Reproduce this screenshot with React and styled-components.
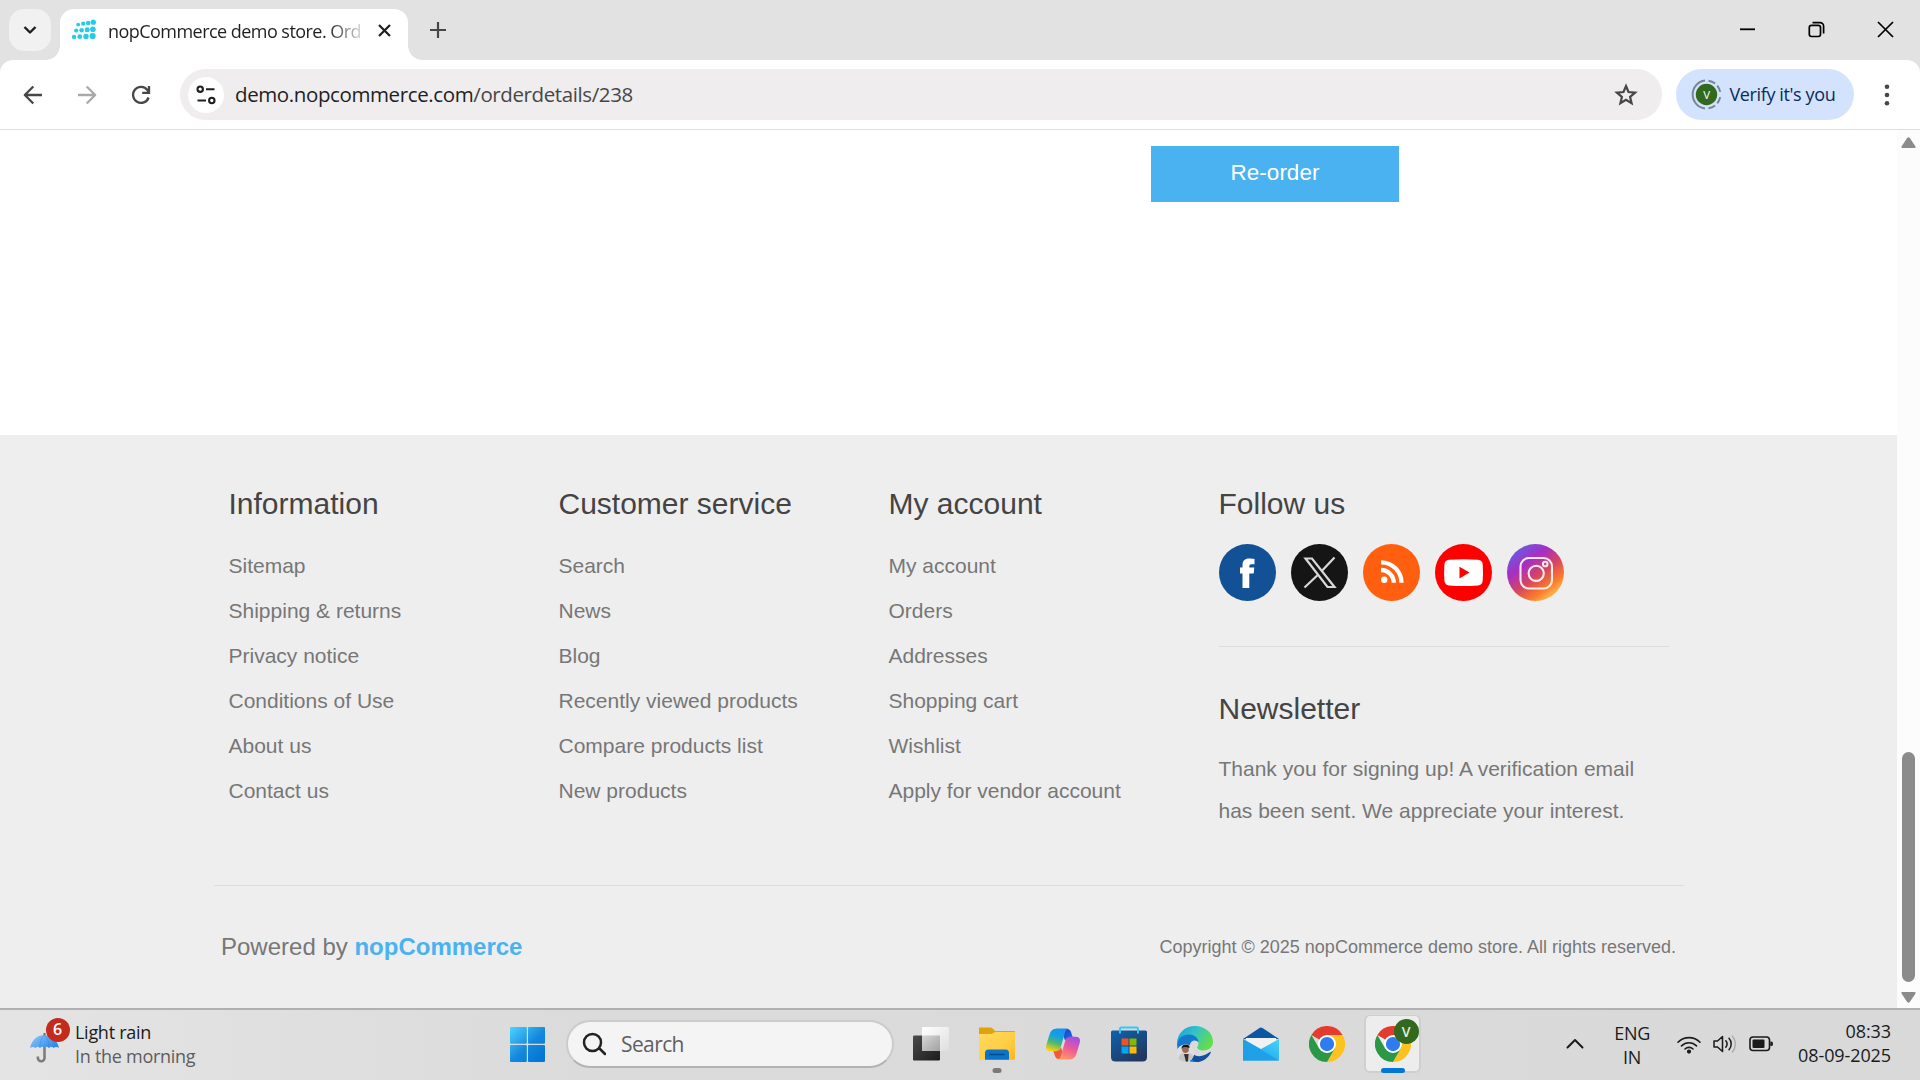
import React from 'react';
import styled, { createGlobalStyle } from 'styled-components';

const sans = `'Liberation Sans', Arial, sans-serif`;
const ui = `'Open Sans', 'Noto Sans', sans-serif`;

const Global = createGlobalStyle`
  *, *::before, *::after { box-sizing: border-box; }
  body { margin: 0; background: #fff; overflow: hidden; }
  svg { display: block; flex: none; }
  h2, p, ul { margin: 0; padding: 0; font-weight: 400; list-style: none; }
  button { border: 0; padding: 0; background: none; font: inherit; }
`;

const Screen = styled.div`
  width: 1920px;
  height: 1080px;
  display: flex;
  flex-direction: column;
  overflow: hidden;
  font-family: ${ui};
`;

/* ---------- browser chrome ---------- */
const TabStrip = styled.header`
  height: 60px;
  flex: none;
  background: #e2e2e2;
  display: flex;
  align-items: flex-start;
  padding: 9px 0 0 9px;
`;

const TabSearch = styled.button`
  width: 42px;
  height: 42px;
  border-radius: 15px;
  background: #f1f1f1;
  display: grid;
  place-items: center;
`;

const Tab = styled.div`
  position: relative;
  width: 348px;
  height: 51px;
  margin-left: 9px;
  padding: 0 18px 9px 11px;
  background: #fff;
  border-radius: 14px 14px 0 0;
  display: flex;
  align-items: center;

  &::before, &::after {
    content: '';
    position: absolute;
    bottom: 0;
    width: 14px;
    height: 14px;
  }
  &::before { left: -14px; background: radial-gradient(circle at 0 0, transparent 13.5px, #fff 14px); }
  &::after { right: -14px; background: radial-gradient(circle at 100% 0, transparent 13.5px, #fff 14px); }
`;

const TabTitle = styled.span`
  width: 252px;
  margin: 2px 18px 0 12px;
  white-space: nowrap;
  font-size: 18px;
  line-height: 26px;
  letter-spacing: -0.54px;
  color: #1f1f1f;
  mask-image: linear-gradient(90deg, #000 220px, transparent 260px);
`;

const NewTab = styled.button`
  margin: 13px 0 0 22px;
`;

const WindowControls = styled.div`
  margin: 12px 26px 0 auto;
  display: flex;
  gap: 52px;
`;

const ToolbarBack = styled.div`
  flex: none;
  background: #e2e2e2;
`;

const Toolbar = styled.div`
  height: 70px;
  background: #fff;
  border-bottom: 1px solid #dfdfdf;
  border-radius: 13px 13px 0 0;
  display: flex;
  align-items: center;
  padding-left: 18px;
`;

const NavButtons = styled.div`
  display: flex;
  gap: 24px;
`;

const AddressBar = styled.div`
  width: 1482px;
  height: 51px;
  margin-left: 24px;
  padding: 0 21px 0 8px;
  border-radius: 26px;
  background: #efedee;
  display: flex;
  align-items: center;
`;

const SiteInfo = styled.span`
  width: 36px;
  height: 36px;
  border-radius: 50%;
  background: #fff;
  display: grid;
  place-items: center;
`;

const Url = styled.span`
  flex: 1;
  margin: 0 0 2px 11px;
  font-size: 20.5px;
  line-height: 30px;
  letter-spacing: -0.39px;
  color: #1f1f1f;
`;

const UrlPath = styled.span`
  color: #474747;
`;

const ProfileChip = styled.button`
  width: 178px;
  height: 51px;
  margin-left: 13.5px;
  padding-left: 15px;
  border-radius: 26px;
  background: #d3e3fd;
  display: flex;
  align-items: center;
  gap: 8px;
  font-size: 18px;
  letter-spacing: -0.38px;
  white-space: nowrap;
  color: #0b2a5c;
`;

const ChipLabel = styled.span`
  margin-bottom: 1px;
`;

const MenuDots = styled.button`
  margin-left: 27px;
`;

/* ---------- page ---------- */
const Viewport = styled.div`
  flex: 1;
  min-height: 0;
  display: flex;
`;

const Page = styled.main`
  width: 1897px;
  display: flex;
  flex-direction: column;
  font-family: ${sans};
`;

const OrderArea = styled.section`
  height: 305px;
  padding: 16px 498px 0 0;
  display: flex;
  justify-content: flex-end;
  align-items: flex-start;
`;

const ReorderButton = styled.button`
  width: 248px;
  height: 56px;
  padding-bottom: 2px;
  background: #4ab2f1;
  color: #fff;
  font-family: ${sans};
  font-size: 22.5px;
`;

const Footer = styled.footer`
  flex: 1;
  background: #eee;
  padding-top: 52px;
  color: #777;
`;

const FooterInner = styled.div`
  width: 1470px;
  margin: 0 auto;
`;

const FooterUpper = styled.div`
  height: 398px;
  padding: 0 15px;
  display: grid;
  grid-template-columns: 330px 330px 330px 450px;
`;

const FooterTitle = styled.h2`
  font-size: 30px;
  line-height: 34px;
  color: #444;
`;

const LinkList = styled.ul`
  margin-top: 22px;
`;

const LinkItem = styled.li`
  height: 45px;
  font-size: 21px;
  line-height: 45px;
  white-space: nowrap;
`;

const SocialRow = styled.div`
  display: flex;
  gap: 15px;
  margin-top: 23px;
  padding-bottom: 45px;
  border-bottom: 1px solid #ddd;
  margin-bottom: 45px;
`;

const Notice = styled.p`
  margin-top: 22px;
  font-size: 21px;
  line-height: 42px;
`;

const FooterLower = styled.div`
  border-top: 1px solid #ddd;
  padding: 38px 7.5px 0;
  display: flex;
  justify-content: space-between;
  align-items: center;
  line-height: 46px;
`;

const Powered = styled.span`
  font-size: 24px;
`;

const Brand = styled.b`
  color: #4ab2f1;
`;

const Copyright = styled.span`
  font-size: 18px;
`;

const ScrollTrack = styled.div`
  width: 23px;
  background: #fcfcfc;
  display: flex;
  flex-direction: column;
  align-items: center;
  padding: 7px 0 5px;
`;

const Thumb = styled.div`
  width: 13px;
  height: 230px;
  margin: auto 0 10px;
  border-radius: 7px;
  background: #8b8b8b;
`;

/* ---------- taskbar ---------- */
const Taskbar = styled.footer`
  height: 72px;
  flex: none;
  border-top: 2px solid #b0b0b0;
  padding-bottom: 2px;
  background: linear-gradient(90deg, #e4e4e4, #dbdbdb 30%, #d9d9d9);
  display: flex;
  align-items: center;
  color: #1b1b1b;
  font-size: 18px;
`;

const Weather = styled.div`
  width: 481px;
  margin: 0 0 1px 29px;
  display: flex;
  align-items: center;
  gap: 15px;
`;

const WeatherIcon = styled.div`
  position: relative;
  width: 31px;
  height: 51px;
  padding-top: 15px;
`;

const Badge = styled.span`
  position: absolute;
  left: 16.5px;
  top: 0;
  width: 24px;
  height: 24px;
  border-radius: 50%;
  background: #c42b1c;
  color: #fff;
  font-size: 16px;
  font-weight: 600;
  line-height: 23px;
  text-align: center;
`;

const Stack = styled.div`
  display: flex;
  flex-direction: column;
  line-height: 24px;
  white-space: nowrap;
  text-align: ${p => p.$align || 'left'};
  letter-spacing: ${p => p.$track || 0}px;
`;

const Muted = styled.span`
  color: #5d5d5d;
`;

const SearchBox = styled.div`
  width: 328px;
  height: 48px;
  margin: 0 3.5px 0 21px;
  padding-left: 14px;
  border: 2px solid #cbcbcb;
  border-bottom-color: #b3b3b3;
  border-radius: 24px;
  background: #f4f4f4;
  display: flex;
  align-items: center;
  gap: 15px;
  font-size: 21px;
  letter-spacing: -0.6px;
  color: #5f5f5f;
`;

const AppSlot = styled.div`
  width: 66px;
  height: 70px;
  position: relative;
  display: grid;
  place-items: center;
`;

const ActiveTile = styled.div`
  width: 57px;
  height: 58px;
  border: 2px solid #cfcfcf;
  border-top-width: 1px;
  border-radius: 6px;
  background: #ededed;
  display: grid;
  place-items: center;
`;

const Indicator = styled.span`
  position: absolute;
  left: 50%;
  bottom: 6px;
  width: ${p => (p.$active ? 24 : 9)}px;
  height: 5px;
  transform: translateX(-50%);
  border-radius: 3px;
  background: ${p => (p.$active ? '#0078d4' : '#7a7a7a')};
`;

const AvatarBadge = styled.span`
  position: absolute;
  left: 34px;
  top: 9.5px;
  width: 25px;
  height: 25px;
  border-radius: 50%;
  background: #33691e;
  color: #e4ecdf;
  font: 600 14px/25px ${ui};
  text-align: center;
`;

const Tray = styled.div`
  margin-left: auto;
  padding-right: 29px;
  display: flex;
  align-items: center;
`;

const LanguageBox = styled.div`
  width: 36px;
  margin: 1px 27px 0 30px;
  display: flex;
  justify-content: center;
`;

const TrayIcons = styled.div`
  display: flex;
  align-items: center;
  gap: 12px;
  margin-right: 24px;
`;

const Clock = styled.div`
  margin-bottom: 2px;
`;

/* ---------- icons ---------- */
const Line = ({ w, h = w, d, s = 2, c = '#333', vb, cap = 'butt' }) => (
  <svg width={w} height={h} viewBox={vb || `0 0 ${w} ${h}`} fill="none" stroke={c} strokeWidth={s} strokeLinecap={cap} strokeLinejoin="round">
    <path d={d} />
  </svg>
);

const Favicon = () => (
  <svg width="25" height="24" viewBox="0 0 25 24" fill="#27cbe8">
    {[[7.2, 6.6, 1.9], [12.2, 5.7, 2.1], [17.2, 5, 2.3], [22.3, 4.2, 2.6],
      [5.2, 12.6, 2.1], [10.6, 12.2, 2.3], [16.2, 11.7, 2.5], [21.9, 11.2, 2.8],
      [3, 18.9, 2.2], [8.8, 18.7, 2.4], [15, 18.4, 2.7], [21.6, 18, 3.1]].map(([x, y, r]) => (
      <circle key={`${x}-${y}`} cx={x} cy={y} r={r} />
    ))}
  </svg>
);

const Reload = () => (
  <svg width="30" height="30" viewBox="0 0 30 30" fill="none" stroke="#474747" strokeWidth="2.3">
    <path d="M22.6 17.5A8 8 0 1 1 21.4 10L23 12.2" />
    <path d="M23 6v6.8h-6.8" />
  </svg>
);

const Tune = () => (
  <svg width="22" height="22" viewBox="0 0 22 22" fill="none" stroke="#1f1f1f" strokeWidth="2.1">
    <circle cx="5.2" cy="5.2" r="2.7" /><path d="M11 5.2h8.500M2.500 16.500h8.500" /><circle cx="16.800" cy="16.500" r="2.700" />
  </svg>
);

const Star = () => (
  <svg width="30" height="30" viewBox="0 0 30 30" fill="none" stroke="#474747" strokeWidth="2.2" strokeLinejoin="miter">
    <path d="M15 6l2.500 6 6.600.6-5 4.300 1.500 6.400-5.600-3.400-5.600 3.400 1.500-6.400-5-4.300 6.600-.6z" />
  </svg>
);

const Restore = () => (
  <svg width="17" height="17" viewBox="0 0 17 17" fill="none" stroke="#000" strokeWidth="1.7">
    <rect x="1.3" y="4.3" width="11.2" height="11.2" rx="2.2" />
    <path d="M4.5 1.6h7.5a3.6 3.6 0 0 1 3.6 3.6v7.4" />
  </svg>
);

const ChipAvatar = () => (
  <svg width="31" height="31" viewBox="0 0 31 31">
    <path d="M14 1.6A14 14 0 0 0 14 29.4M17.5 1.7a14 14 0 0 1 6.6 2.8M26.2 6.6a14 14 0 0 1 3 6.3M29.2 18.1a14 14 0 0 1-3 6.3M24.1 26.5a14 14 0 0 1-6.6 2.8" fill="none" stroke="#7a8496" strokeWidth="2" />
    <circle cx="15.5" cy="15.5" r="10.7" fill="#33691e" />
    <text x="15.5" y="19.7" textAnchor="middle" fontFamily="Open Sans" fontSize="11.5" fill="#fff">V</text>
  </svg>
);

const Facebook = () => (
  <svg width="57" height="57" viewBox="0 0 57 57">
    <circle cx="28.5" cy="28.5" r="28.5" fill="#125196" />
    <path d="M23.5 44V29.5H21V23.5h2.5V21c0-4.200 2.300-6.500 6.600-6.500 2 0 4 .2 5.400.5v5.300h-2.700c-2 0-2.500.9-2.500 2.200v1h5l-.6 6h-4.400V44z" fill="#fff" />
  </svg>
);

const XLogo = () => (
  <svg width="57" height="57" viewBox="0 0 57 57">
    <circle cx="28.500" cy="28.500" r="28.500" fill="#151515" />
    <g fill="none" stroke="#d8d8d8" strokeWidth="2.200">
      <path d="M14.500 14.500h6.500L43.500 43H36.500z" />
      <path d="M43.500 13.500L31 26.800M26.500 31.200L13.500 43.500" />
    </g>
  </svg>
);

const Rss = () => (
  <svg width="57" height="57" viewBox="0 0 57 57">
    <circle cx="28.500" cy="28.500" r="28.500" fill="#ff5f0f" />
    <circle cx="21.200" cy="35.800" r="3.200" fill="#fff" />
    <g fill="none" stroke="#fff" strokeWidth="4.300">
      <path d="M18 26a12.800 12.800 0 0 1 12.800 12.800" />
      <path d="M18 18.300a20.500 20.500 0 0 1 20.500 20.500" />
    </g>
  </svg>
);

const Youtube = () => (
  <svg width="57" height="57" viewBox="0 0 57 57">
    <circle cx="28.500" cy="28.500" r="28.500" fill="#f00" />
    <path d="M14 15.800q14.500-1 29 0 4.500.4 4.700 4.700.6 8 0 16-.3 4.500-4.700 4.900-14.500 1-29 0-4.200-.4-4.600-4.900-.6-8 0-16 .300-4.300 4.600-4.700z" fill="#fff" />
    <path d="M24.500 22.800v11.600l10-5.800z" fill="#f00" />
  </svg>
);

const Instagram = () => (
  <svg width="57" height="57" viewBox="0 0 57 57">
    <defs>
      <linearGradient id="ig" x1=".15" y1=".1" x2=".8" y2=".97">
        <stop offset="0" stopColor="#6a5ae0" /><stop offset=".28" stopColor="#a62fc4" />
        <stop offset=".55" stopColor="#d6455f" /><stop offset=".8" stopColor="#fd7e2a" /><stop offset="1" stopColor="#ffc860" />
      </linearGradient>
    </defs>
    <circle cx="28.500" cy="28.500" r="28.500" fill="url(#ig)" />
    <g fill="none" stroke="#fff" strokeOpacity=".88" strokeWidth="2.100">
      <rect x="13.500" y="14" width="31.500" height="30.500" rx="8.500" />
      <circle cx="29.200" cy="29.300" r="7.600" /><circle cx="38.200" cy="20" r="2.300" />
    </g>
  </svg>
);

const Umbrella = () => (
  <svg width="31" height="30" viewBox="0 0 31 30">
    <defs><linearGradient id="um" x2="1" y2=".6"><stop stopColor="#8fcaff" /><stop offset="1" stopColor="#2e8bea" /></linearGradient></defs>
    <path d="M15.500 12v13a3.300 3.300 0 0 1-6.600 0v-1.500" fill="none" stroke="#7d7d7d" strokeWidth="2.600" />
    <path d="M15.500 0v3" stroke="#666" strokeWidth="2" />
    <path d="M1 15C3 6 9 2 15.500 2S28 6 30 15q-3-2-5.500 0-2-2.300-4.500 0-2.300-2.300-4.500-.3-2.300-2-4.500.3-2.500-2.300-4.500 0-2.500-2-5.500 0z" fill="url(#um)" />
    <path d="M11 14.700Q11 6 15.500 2 20 6 20 15" fill="none" stroke="#2f80d8" strokeWidth=".6" opacity=".6" />
  </svg>
);

const WindowsLogo = () => (
  <svg width="35" height="35" viewBox="0 0 35 35">
    <defs><linearGradient id="win" gradientUnits="userSpaceOnUse" x1="0" y1="0" x2="30" y2="32"><stop stopColor="#4cd3ff" /><stop offset=".6" stopColor="#1488dd" /><stop offset="1" stopColor="#0078d4" /></linearGradient></defs>
    <g fill="url(#win)">
      <rect width="16.800" height="16.800" rx="1" /><rect x="18" width="17" height="16.800" rx="1" />
      <rect y="18" width="16.800" height="17" rx="1" /><rect x="18" y="18" width="17" height="17" rx="1" />
    </g>
  </svg>
);

const TaskView = () => (
  <svg width="36" height="36" viewBox="0 0 36 36">
    <defs>
      <linearGradient id="tv1" x2="1" y2="1"><stop stopColor="#4a4a4a" /><stop offset="1" stopColor="#1c1c1c" /></linearGradient>
      <linearGradient id="tv2" x2="1" y2="1"><stop stopColor="#fff" /><stop offset="1" stopColor="#dedede" /></linearGradient>
      <linearGradient id="tv3" x2="1" y2="1"><stop stopColor="#d6d6d6" /><stop offset="1" stopColor="#a2a2a2" /></linearGradient>
    </defs>
    <rect x="0" y="9.500" width="27" height="25" rx="1.200" fill="url(#tv1)" />
    <rect x="9" y="1" width="27" height="24" rx="1.200" fill="url(#tv2)" />
    <rect x="9" y="9.500" width="18" height="15.500" fill="url(#tv3)" />
  </svg>
);

const Folder = () => (
  <svg width="36" height="34" viewBox="0 0 36 34">
    <defs><linearGradient id="fo" x2="1" y2="1"><stop stopColor="#ffda5e" /><stop offset=".6" stopColor="#ffce45" /><stop offset="1" stopColor="#fcb61a" /></linearGradient></defs>
    <path d="M0 1.500Q0 .5 1 .5H11.500q1 0 1.600.6L16 4H35q1 0 1 1v6H0z" fill="#e0a30b" />
    <path d="M0 7H12.500L16 5H35q1 0 1 1V31.500q0 1.200-1.200 1.200H1.200Q0 32.700 0 31.500z" fill="url(#fo)" />
    <path d="M6 32.700V26q0-3.500 3.500-3.500h17Q30 22.500 30 26v6.700z" fill="#0a74c9" />
    <path d="M11 27.500h14" stroke="#04498a" strokeWidth="1.600" strokeLinecap="round" />
  </svg>
);

const Copilot = () => (
  <svg width="36" height="34" viewBox="0 0 36 34">
    <defs>
      <linearGradient id="c1" x1=".6" y1="0" x2=".3" y2="1"><stop stopColor="#1b8ff0" /><stop offset=".35" stopColor="#13a3e0" /><stop offset=".65" stopColor="#52b86b" /><stop offset="1" stopColor="#ffd20f" /></linearGradient>
      <linearGradient id="c2" x1=".7" y1="0" x2=".3" y2="1"><stop stopColor="#a04ee8" /><stop offset=".5" stopColor="#ee5a96" /><stop offset="1" stopColor="#ff9a62" /></linearGradient>
      <linearGradient id="c3" x2="1" y2="1"><stop stopColor="#1a38c8" /><stop offset="1" stopColor="#1f72e8" /></linearGradient>
    </defs>
    <path d="M16 2h6q3 0 4 3l2 6h-4q-3 0-4 2.500z" fill="url(#c3)" />
    <path d="M20 32h-6q-3 0-4-3L8 23h4q3 0 4-2.500z" fill="#f4583c" />
    <path d="M12 1.500h11q-2 .5-3 4l-4.200 14.500q-1.200 4.200-5.200 4.200H5.500q-6 0-4-7L4.500 7.500q1.500-6 7.500-6z" fill="url(#c1)" />
    <path d="M24 32.500H13q2-.5 3-4l4.200-14.500q1.200-4.200 5.200-4.200h5.100q6 0 4 7L31.500 26.500q-1.500 6-7.500 6z" fill="url(#c2)" />
  </svg>
);

const Store = () => (
  <svg width="36" height="36" viewBox="0 0 36 36">
    <defs><linearGradient id="st" x2=".7" y2="1"><stop stopColor="#0d63ae" /><stop offset="1" stopColor="#22375f" /></linearGradient></defs>
    <path d="M0 6q0-1.500 1.500-1.500h33Q36 4.500 36 6v25q0 4.500-4.500 4.500h-27Q0 35.500 0 31z" fill="url(#st)" />
    <path d="M9 7.500V2.800q0-1.300 1.300-1.300h15.400q1.300 0 1.300 1.300v4.700" fill="none" stroke="#3cc4f4" strokeWidth="2" />
    <rect x="10.500" y="12.500" width="7" height="7" fill="#f25022" /><rect x="18.500" y="12.500" width="7" height="7" fill="#7fba00" />
    <rect x="10.500" y="20.500" width="7" height="7" fill="#00a4ef" /><rect x="18.500" y="20.500" width="7" height="7" fill="#ffb900" />
  </svg>
);

const Edge = () => (
  <svg width="36" height="36" viewBox="0 0 36 36">
    <defs>
      <linearGradient id="e1" x2="1" y2=".5"><stop stopColor="#159fd8" /><stop offset=".5" stopColor="#31c3c8" /><stop offset="1" stopColor="#62dd4c" /></linearGradient>
      <clipPath id="ec"><circle cx="8.500" cy="27" r="8.800" /></clipPath>
    </defs>
    <path d="M0 18C0 7 8 0 18 0s18 7 18 15.500C36 21 32 24.500 26.500 24.500c-4 0-6.200-1.500-6.200-3 0-1.300 1.200-1.700 1.200-4 0-4-4-7.500-9.500-7.500C5 10 0 15 0 18z" fill="url(#e1)" />
    <path d="M0 18C1 12 6 8.500 12 8.500c6 0 9.500 4 9.500 8-2-3-7.500-3-8.500 2C11.500 27 18 35 24 35c-2 1-4 1-6 1C8 36 0 28 0 18z" fill="#1478cf" />
    <path d="M13 19c-1 8 5 13 13 10.500 3-1 5.500-2.500 7-3.500.8-.4 1 .2.600.9C31 32.500 25 36 19 36c-5-2-9-9-6-17z" fill="#114f9f" />
    <g clipPath="url(#ec)">
      <rect y="18" width="18" height="18" fill="#dedede" />
      <path d="M1 36q0-8 5-9l3 2 3-2q5 1 5 9z" fill="#c9c5c2" />
      <path d="M7 28l2 8h2l.500-8z" fill="#33302f" />
      <circle cx="8.500" cy="23.500" r="3.400" fill="#9a6a52" /><path d="M4.500 23q0-4.500 4.200-4.500T12.500 22q-3-1.500-6-1z" fill="#17120f" />
    </g>
  </svg>
);

const Mail = () => (
  <svg width="36" height="34" viewBox="0 0 36 34">
    <defs><linearGradient id="ma" x1="0" y1="1" x2="1" y2="0"><stop stopColor="#1597e6" /><stop offset="1" stopColor="#45d5fb" /></linearGradient></defs>
    <path d="M0 12L16.500 1q1.500-1 3 0L36 12z" fill="#0b57a4" />
    <path d="M3 11h30v3L18 24 3 14z" fill="#f1f1f1" />
    <path d="M0 12l18 10 18-10v21.500H0z" fill="url(#ma)" />
    <path d="M0 12l36 21.500H0z" fill="#1e9fe8" opacity=".9" />
  </svg>
);

const Chrome = () => (
  <svg width="36" height="36" viewBox="0 0 48 48">
    <path d="M24 24L3.200 12A24 24 0 0 1 44.800 12H24z" fill="#e33b2e" />
    <path d="M24 24l10.400 6L24 48A24 24 0 0 0 44.800 12H24z" fill="#fcc31e" />
    <path d="M3.200 12A24 24 0 0 0 24 48l10.400-18-10.400 6-10.400-6z" fill="#2b9846" />
    <circle cx="24" cy="24" r="12" fill="#fff" /><circle cx="24" cy="24" r="9.500" fill="#2f7cf0" />
  </svg>
);

const Wifi = () => (
  <svg width="24" height="19" viewBox="0 0 24 19" fill="none" stroke="#1b1b1b" strokeWidth="1.600" strokeLinecap="round">
    <path d="M1 7.200a15.500 15.500 0 0 1 22 0M4.500 10.900a10.500 10.500 0 0 1 15 0M8 14a5.700 5.700 0 0 1 8 0" />
    <circle cx="12" cy="16.600" r="1.300" fill="#1b1b1b" />
  </svg>
);

const Speaker = () => (
  <svg width="24" height="20" viewBox="0 0 24 20" fill="none" stroke="#1b1b1b" strokeWidth="1.500" strokeLinejoin="round" strokeLinecap="round">
    <path d="M1 7v6h3.500L9.500 17.500v-15L4.500 7z" />
    <path d="M12.800 6.800a5 5 0 0 1 0 6.400M16 4.300a8.500 8.500 0 0 1 0 11.400" />
    <path d="M19.300 2a12 12 0 0 1 0 16" stroke="#b0b0b0" />
  </svg>
);

const Battery = () => (
  <svg width="25" height="16" viewBox="0 0 25 16">
    <rect x="1" y="1" width="19.500" height="13.500" rx="3" fill="none" stroke="#1b1b1b" strokeWidth="1.600" />
    <rect x="3.500" y="3.500" width="12" height="8.500" rx="1" fill="#1b1b1b" />
    <path d="M21.300 5.500h1a1.600 1.600 0 0 1 1.600 1.600v1.300a1.600 1.600 0 0 1-1.600 1.600h-1z" fill="#1b1b1b" />
  </svg>
);

const ArrowTip = ({ down }) => (
  <svg width="15" height="11" viewBox="0 0 15 11" fill="#8b8b8b">
    <path d={down ? 'M1.500 0h12q1.800 0 .8 1.700L9 9.800q-1.500 1.700-3 0L.7 1.700Q-.3 0 1.500 0z' : 'M1.500 11h12q1.800 0 .8-1.700L9 1.200q-1.500-1.700-3 0L.7 9.300Q-.3 11 1.500 11z'} />
  </svg>
);

const columns = [
  ['Information', ['Sitemap', 'Shipping & returns', 'Privacy notice', 'Conditions of Use', 'About us', 'Contact us']],
  ['Customer service', ['Search', 'News', 'Blog', 'Recently viewed products', 'Compare products list', 'New products']],
  ['My account', ['My account', 'Orders', 'Addresses', 'Shopping cart', 'Wishlist', 'Apply for vendor account']],
];

export default function App() {
  return (
    <Screen>
      <Global />
      <TabStrip>
        <TabSearch><Line w={14} h={10} d="M1.500 2l5.500 5.500L12.500 2" s={2.400} c="#1f1f1f" /></TabSearch>
        <Tab>
          <Favicon />
          <TabTitle>nopCommerce demo store. Ord</TabTitle>
          <Line w={13} d="M1 1l11 11M12 1L1 12" s={2.200} c="#1f1f1f" />
        </Tab>
        <NewTab><Line w={16} d="M8 0v16M0 8h16" s={2.200} c="#474747" /></NewTab>
        <WindowControls>
          <Line w={17} d="M1 8.300h15" s={1.800} c="#000" />
          <Restore />
          <Line w={17} d="M1 1l15 15M16 1L1 16" s={1.700} c="#000" />
        </WindowControls>
      </TabStrip>
      <ToolbarBack>
        <Toolbar>
          <NavButtons>
            <Line w={30} d="M24 15H7M15.300 6.500L6.800 15l8.500 8.500" s={2.300} c="#474747" />
            <Line w={30} d="M6 15h17M14.700 6.500l8.500 8.500-8.500 8.500" s={2.300} c="#a9a9a9" />
            <Reload />
          </NavButtons>
          <AddressBar>
            <SiteInfo><Tune /></SiteInfo>
            <Url>demo.nopcommerce.com<UrlPath>/orderdetails/238</UrlPath></Url>
            <Star />
          </AddressBar>
          <ProfileChip><ChipAvatar /><ChipLabel>Verify it's you</ChipLabel></ProfileChip>
          <MenuDots>
            <svg width="12" height="24" fill="#474747"><circle cx="6" cy="3.700" r="2.300" /><circle cx="6" cy="12" r="2.300" /><circle cx="6" cy="20.300" r="2.300" /></svg>
          </MenuDots>
        </Toolbar>
      </ToolbarBack>
      <Viewport>
        <Page>
          <OrderArea><ReorderButton>Re-order</ReorderButton></OrderArea>
          <Footer>
            <FooterInner>
              <FooterUpper>
                {columns.map(([title, links]) => (
                  <div key={title}>
                    <FooterTitle>{title}</FooterTitle>
                    <LinkList>{links.map(l => <LinkItem key={l}>{l}</LinkItem>)}</LinkList>
                  </div>
                ))}
                <div>
                  <FooterTitle>Follow us</FooterTitle>
                  <SocialRow><Facebook /><XLogo /><Rss /><Youtube /><Instagram /></SocialRow>
                  <FooterTitle>Newsletter</FooterTitle>
                  <Notice>Thank you for signing up! A verification email has been sent. We appreciate your interest.</Notice>
                </div>
              </FooterUpper>
              <FooterLower>
                <Powered>Powered by <Brand>nopCommerce</Brand></Powered>
                <Copyright>Copyright © 2025 nopCommerce demo store. All rights reserved.</Copyright>
              </FooterLower>
            </FooterInner>
          </Footer>
        </Page>
        <ScrollTrack><ArrowTip /><Thumb /><ArrowTip down /></ScrollTrack>
      </Viewport>
      <Taskbar>
        <Weather>
          <WeatherIcon><Umbrella /><Badge>6</Badge></WeatherIcon>
          <Stack $track={-0.28}><span>Light rain</span><Muted>In the morning</Muted></Stack>
        </Weather>
        <WindowsLogo />
        <SearchBox>
          <Line w={24} d="M17 10.500a8.500 8.500 0 1 1-17 0a8.500 8.500 0 1 1 17 0M15.500 16.500l5.500 5.500" vb="-2 0 24 24" s={2.500} c="#222" cap="round" />
          Search
        </SearchBox>
        <AppSlot><TaskView /></AppSlot>
        <AppSlot><Folder /><Indicator /></AppSlot>
        <AppSlot><Copilot /></AppSlot>
        <AppSlot><Store /></AppSlot>
        <AppSlot><Edge /></AppSlot>
        <AppSlot><Mail /></AppSlot>
        <AppSlot><Chrome /></AppSlot>
        <AppSlot><ActiveTile><Chrome /></ActiveTile><AvatarBadge>V</AvatarBadge><Indicator $active /></AppSlot>
        <Tray>
          <Line w={18} h={12} d="M1.500 9.500L9 2l7.500 7.500" s={2} c="#1b1b1b" cap="round" />
          <LanguageBox><Stack $align="center" $track={-0.3}><span>ENG</span><span>IN</span></Stack></LanguageBox>
          <TrayIcons><Wifi /><Speaker /><Battery /></TrayIcons>
          <Clock><Stack $align="right" $track={-0.1}><span>08:33</span><span>08-09-2025</span></Stack></Clock>
        </Tray>
      </Taskbar>
    </Screen>
  );
}
